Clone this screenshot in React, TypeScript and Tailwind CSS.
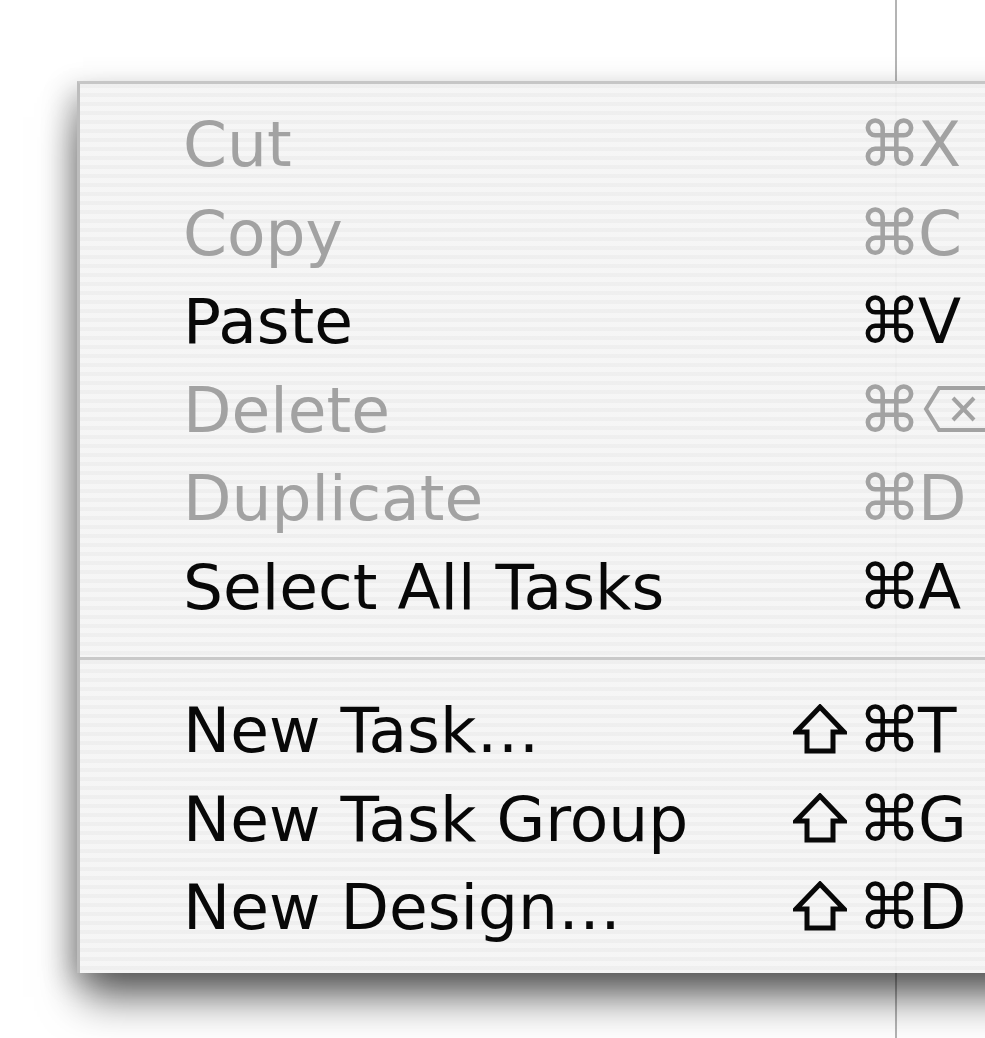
type Item =
  | { kind: 'item'; label: string; key: string; shift?: boolean; disabled?: boolean }
  | { kind: 'sep' }

const items: Item[] = [
  { kind: 'item', label: 'Cut', key: 'X', disabled: true },
  { kind: 'item', label: 'Copy', key: 'C', disabled: true },
  { kind: 'item', label: 'Paste', key: 'V' },
  { kind: 'item', label: 'Delete', key: '⌫', disabled: true },
  { kind: 'item', label: 'Duplicate', key: 'D', disabled: true },
  { kind: 'item', label: 'Select All Tasks', key: 'A' },
  { kind: 'sep' },
  { kind: 'item', label: 'New Task…', key: 'T', shift: true },
  { kind: 'item', label: 'New Task Group', key: 'G', shift: true },
  { kind: 'item', label: 'New Design…', key: 'D', shift: true },
]

function DeleteKey() {
  return (
    <svg width="70" height="48" viewBox="0 0 70 48" className="ml-[5px] mt-[-4px]">
      <path d="M3 24 L16 3 H70 V45 H16 Z" fill="none" stroke="currentColor" strokeWidth="4" />
      <path d="M30 13 L51 35 M51 13 L30 35" stroke="currentColor" strokeWidth="4" />
    </svg>
  )
}

function ShiftKey() {
  return (
    <svg width="54" height="50" viewBox="0 0 54 50" className="mt-[-4px]">
      <path d="M27 3 L51 28 H40 V47 H14 V28 H3 Z" fill="none" stroke="currentColor" strokeWidth="5" strokeLinejoin="miter" />
    </svg>
  )
}

function MenuRow({ label, keyName, shift, disabled }: { label: string; keyName: string; shift?: boolean; disabled?: boolean }) {
  return (
    <div
      className={`grid grid-cols-[602px_73px_60px_1fr] items-center h-[88.5px] leading-[88.5px] pl-[103px] ${
        disabled ? 'text-[#a2a2a2]' : 'text-[#080808]'
      }`}
    >
      <span className="whitespace-nowrap">{label}</span>
      <span className="flex justify-end pr-[11px]">{shift ? <ShiftKey /> : null}</span>
      <span className="tracking-[-10px]">⌘</span>
      <span className="flex items-center">{keyName === '⌫' ? <DeleteKey /> : keyName}</span>
    </div>
  )
}

export default function App() {
  return (
    <div className="relative w-full h-[1038px] overflow-hidden bg-white">
      {/* the window edge behind the popup */}
      <div className="absolute left-[895px] top-0 bottom-0 w-[2px] bg-[#b4b4b4]" />

      <div className="relative z-10 pt-[81px] pl-[77px]">
        <div
          className="w-[1000px] border-t-[3px] border-l-[3px] border-t-[#c6c6c6] border-l-[#bdbdbd] pt-[17px] pb-[20px] bg-[repeating-linear-gradient(180deg,rgba(238,238,238,0.95)_0px,rgba(238,238,238,0.95)_4.5px,rgba(245,245,245,0.95)_4.5px,rgba(245,245,245,0.95)_9px)] shadow-[0_30px_40px_-6px_rgba(0,0,0,0.6),-8px_8px_26px_rgba(0,0,0,0.22)] text-[63px] font-['DejaVu_Sans',sans-serif]"
        >
          {items.map((it, i) =>
            it.kind === 'sep' ? (
              <div key={i} className="pt-[25px] pb-[27px]">
                <div className="h-[3px] bg-[#c9c9c9]" />
              </div>
            ) : (
              <MenuRow key={i} label={it.label} keyName={it.key} shift={it.shift} disabled={it.disabled} />
            )
          )}
        </div>
      </div>
    </div>
  )
}
